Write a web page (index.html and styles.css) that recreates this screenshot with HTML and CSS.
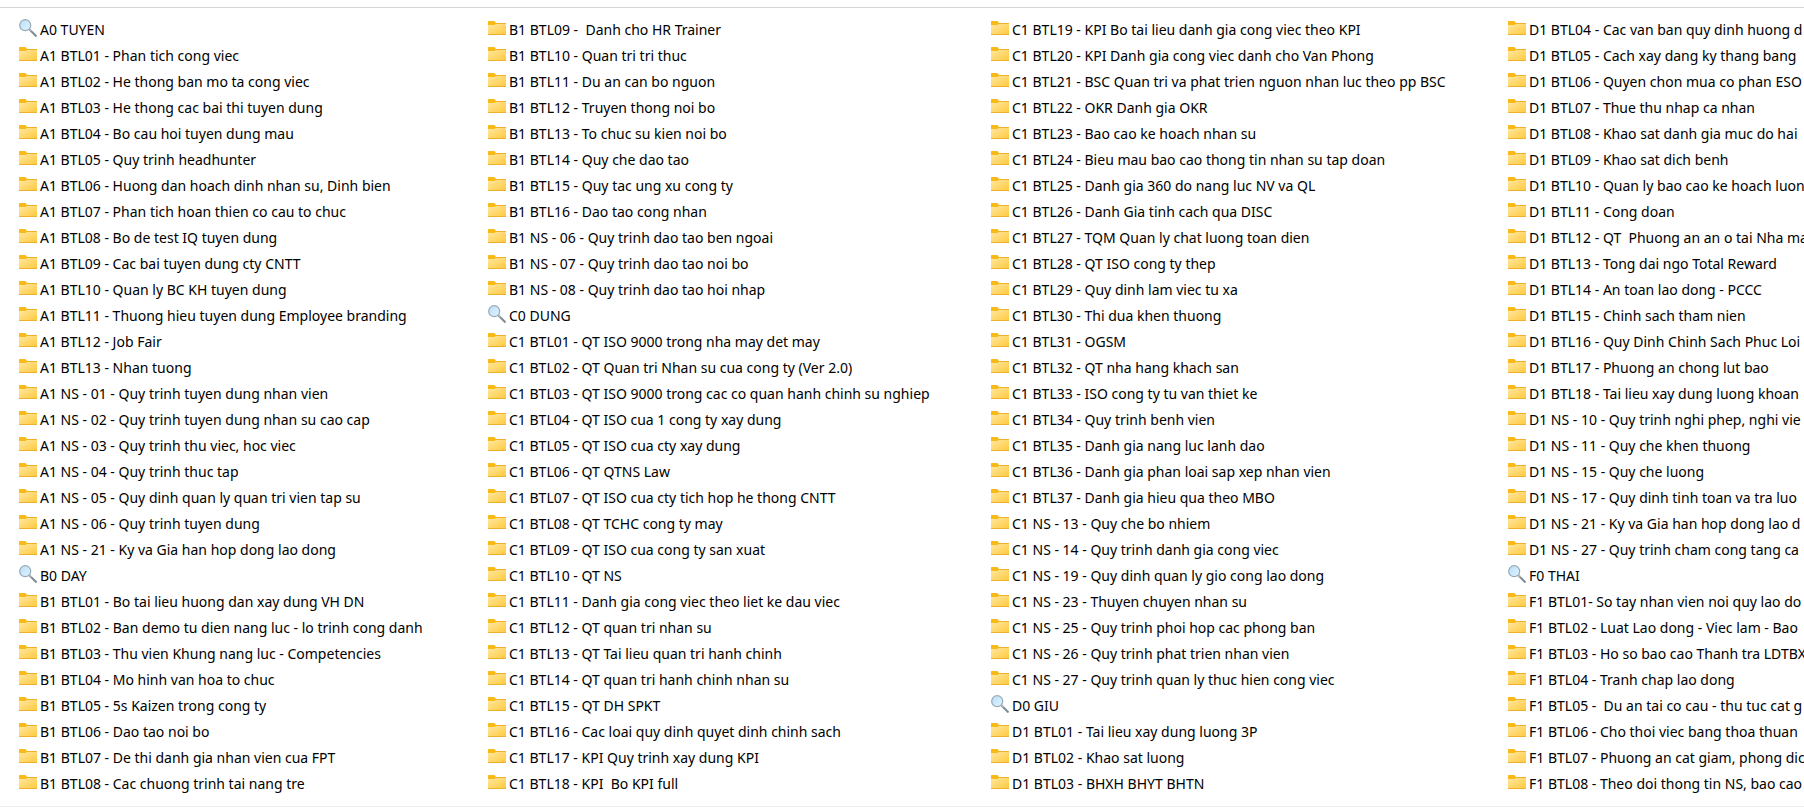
FILE: index.html
```html
<!DOCTYPE html>
<html lang="vi">
<head>
<meta charset="UTF-8">
<meta name="viewport" content="width=device-width, initial-scale=1.0">
<title>BTL</title>
<link rel="stylesheet" href="styles.css">
</head>
<body>
<svg class="sprite" aria-hidden="true">
    <defs>
        <linearGradient id="folder-face" x1="0" y1="0" x2="1" y2="1">
            <stop offset="0" stop-color="#ffe8a3"/>
            <stop offset="1" stop-color="#ffc93d"/>
        </linearGradient>
        <linearGradient id="lens-face" x1="0" y1="0" x2="1" y2="1">
            <stop offset="0" stop-color="#b9defa"/>
            <stop offset="1" stop-color="#e0f4ff"/>
        </linearGradient>
    </defs>
    <symbol id="folder" viewBox="0 0 18 18">
        <path d="M0 2.5Q0 2 .6 2H6Q6.600 2 7 2.500L8 4H18V8H0Z" fill="#f9b917"/>
        <path d="M0 6H6.500L8 4.700H18V15.500H0Z" fill="url(#folder-face)"/>
        <path d="M8 4.500H18" stroke="#f0b02c" stroke-width="1"/>
        <path d="M0 15.500H18" stroke="#eeb030" stroke-width="1"/>
    </symbol>
    <symbol id="search" viewBox="0 0 18 18">
        <path d="M10.500 10.500L17.500 17.500" stroke="#7f8b94" stroke-width="2"/>
        <path d="M10.500 10L12.500 12" stroke="#b5bec5" stroke-width="1.500"/>
        <circle cx="6.200" cy="6.200" r="5.500" fill="url(#lens-face)" stroke="#98a8b5" stroke-width="1.200"/>
    </symbol>
</svg>

<nav class="folders" id="folders"></nav>

<script>
    var columns = [
        [
            "A0 TUYEN",
            "A1 BTL01 - Phan tich cong viec",
            "A1 BTL02 - He thong ban mo ta cong viec",
            "A1 BTL03 - He thong cac bai thi tuyen dung",
            "A1 BTL04 - Bo cau hoi tuyen dung mau",
            "A1 BTL05 - Quy trinh headhunter",
            "A1 BTL06 - Huong dan hoach dinh nhan su, Dinh bien",
            "A1 BTL07 - Phan tich hoan thien co cau to chuc",
            "A1 BTL08 - Bo de test IQ tuyen dung",
            "A1 BTL09 - Cac bai tuyen dung cty CNTT",
            "A1 BTL10 - Quan ly BC KH tuyen dung",
            "A1 BTL11 - Thuong hieu tuyen dung Employee branding",
            "A1 BTL12 - Job Fair",
            "A1 BTL13 - Nhan tuong",
            "A1 NS - 01 - Quy trinh tuyen dung nhan vien",
            "A1 NS - 02 - Quy trinh tuyen dung nhan su cao cap",
            "A1 NS - 03 - Quy trinh thu viec, hoc viec",
            "A1 NS - 04 - Quy trinh thuc tap",
            "A1 NS - 05 - Quy dinh quan ly quan tri vien tap su",
            "A1 NS - 06 - Quy trinh tuyen dung",
            "A1 NS - 21 - Ky va Gia han hop dong lao dong",
            "B0 DAY",
            "B1 BTL01 - Bo tai lieu huong dan xay dung VH DN",
            "B1 BTL02 - Ban demo tu dien nang luc - lo trinh cong danh",
            "B1 BTL03 - Thu vien Khung nang luc - Competencies",
            "B1 BTL04 - Mo hinh van hoa to chuc",
            "B1 BTL05 - 5s Kaizen trong cong ty",
            "B1 BTL06 - Dao tao noi bo",
            "B1 BTL07 - De thi danh gia nhan vien cua FPT",
            "B1 BTL08 - Cac chuong trinh tai nang tre"
        ],
        [
            "B1 BTL09 -  Danh cho HR Trainer",
            "B1 BTL10 - Quan tri tri thuc",
            "B1 BTL11 - Du an can bo nguon",
            "B1 BTL12 - Truyen thong noi bo",
            "B1 BTL13 - To chuc su kien noi bo",
            "B1 BTL14 - Quy che dao tao",
            "B1 BTL15 - Quy tac ung xu cong ty",
            "B1 BTL16 - Dao tao cong nhan",
            "B1 NS - 06 - Quy trinh dao tao ben ngoai",
            "B1 NS - 07 - Quy trinh dao tao noi bo",
            "B1 NS - 08 - Quy trinh dao tao hoi nhap",
            "C0 DUNG",
            "C1 BTL01 - QT ISO 9000 trong nha may det may",
            "C1 BTL02 - QT Quan tri Nhan su cua cong ty (Ver 2.0)",
            "C1 BTL03 - QT ISO 9000 trong cac co quan hanh chinh su nghiep",
            "C1 BTL04 - QT ISO cua 1 cong ty xay dung",
            "C1 BTL05 - QT ISO cua cty xay dung",
            "C1 BTL06 - QT QTNS Law",
            "C1 BTL07 - QT ISO cua cty tich hop he thong CNTT",
            "C1 BTL08 - QT TCHC cong ty may",
            "C1 BTL09 - QT ISO cua cong ty san xuat",
            "C1 BTL10 - QT NS",
            "C1 BTL11 - Danh gia cong viec theo liet ke dau viec",
            "C1 BTL12 - QT quan tri nhan su",
            "C1 BTL13 - QT Tai lieu quan tri hanh chinh",
            "C1 BTL14 - QT quan tri hanh chinh nhan su",
            "C1 BTL15 - QT DH SPKT",
            "C1 BTL16 - Cac loai quy dinh quyet dinh chinh sach",
            "C1 BTL17 - KPI Quy trinh xay dung KPI",
            "C1 BTL18 - KPI  Bo KPI full"
        ],
        [
            "C1 BTL19 - KPI Bo tai lieu danh gia cong viec theo KPI",
            "C1 BTL20 - KPI Danh gia cong viec danh cho Van Phong",
            "C1 BTL21 - BSC Quan tri va phat trien nguon nhan luc theo pp BSC",
            "C1 BTL22 - OKR Danh gia OKR",
            "C1 BTL23 - Bao cao ke hoach nhan su",
            "C1 BTL24 - Bieu mau bao cao thong tin nhan su tap doan",
            "C1 BTL25 - Danh gia 360 do nang luc NV va QL",
            "C1 BTL26 - Danh Gia tinh cach qua DISC",
            "C1 BTL27 - TQM Quan ly chat luong toan dien",
            "C1 BTL28 - QT ISO cong ty thep",
            "C1 BTL29 - Quy dinh lam viec tu xa",
            "C1 BTL30 - Thi dua khen thuong",
            "C1 BTL31 - OGSM",
            "C1 BTL32 - QT nha hang khach san",
            "C1 BTL33 - ISO cong ty tu van thiet ke",
            "C1 BTL34 - Quy trinh benh vien",
            "C1 BTL35 - Danh gia nang luc lanh dao",
            "C1 BTL36 - Danh gia phan loai sap xep nhan vien",
            "C1 BTL37 - Danh gia hieu qua theo MBO",
            "C1 NS - 13 - Quy che bo nhiem",
            "C1 NS - 14 - Quy trinh danh gia cong viec",
            "C1 NS - 19 - Quy dinh quan ly gio cong lao dong",
            "C1 NS - 23 - Thuyen chuyen nhan su",
            "C1 NS - 25 - Quy trinh phoi hop cac phong ban",
            "C1 NS - 26 - Quy trinh phat trien nhan vien",
            "C1 NS - 27 - Quy trinh quan ly thuc hien cong viec",
            "D0 GIU",
            "D1 BTL01 - Tai lieu xay dung luong 3P",
            "D1 BTL02 - Khao sat luong",
            "D1 BTL03 - BHXH BHYT BHTN"
        ],
        [
            "D1 BTL04 - Cac van ban quy dinh huong d",
            "D1 BTL05 - Cach xay dang ky thang bang",
            "D1 BTL06 - Quyen chon mua co phan ESO",
            "D1 BTL07 - Thue thu nhap ca nhan",
            "D1 BTL08 - Khao sat danh gia muc do hai",
            "D1 BTL09 - Khao sat dich benh",
            "D1 BTL10 - Quan ly bao cao ke hoach luon",
            "D1 BTL11 - Cong doan",
            "D1 BTL12 - QT  Phuong an an o tai Nha ma",
            "D1 BTL13 - Tong dai ngo Total Reward",
            "D1 BTL14 - An toan lao dong - PCCC",
            "D1 BTL15 - Chinh sach tham nien",
            "D1 BTL16 - Quy Dinh Chinh Sach Phuc Loi",
            "D1 BTL17 - Phuong an chong lut bao",
            "D1 BTL18 - Tai lieu xay dung luong khoan",
            "D1 NS - 10 - Quy trinh nghi phep, nghi vie",
            "D1 NS - 11 - Quy che khen thuong",
            "D1 NS - 15 - Quy che luong",
            "D1 NS - 17 - Quy dinh tinh toan va tra luo",
            "D1 NS - 21 - Ky va Gia han hop dong lao d",
            "D1 NS - 27 - Quy trinh cham cong tang ca",
            "F0 THAI",
            "F1 BTL01- So tay nhan vien noi quy lao do",
            "F1 BTL02 - Luat Lao dong - Viec lam - Bao",
            "F1 BTL03 - Ho so bao cao Thanh tra LDTBX",
            "F1 BTL04 - Tranh chap lao dong",
            "F1 BTL05 -  Du an tai co cau - thu tuc cat g",
            "F1 BTL06 - Cho thoi viec bang thoa thuan",
            "F1 BTL07 - Phuong an cat giam, phong dic",
            "F1 BTL08 - Theo doi thong tin NS, bao cao"
        ]
    ];

    var html = "";
    columns.forEach(function (names) {
        html += '<ul class="column">';
        names.forEach(function (name) {
            // group rows are A0, B0, C0...
            var icon = name.charAt(1) === "0" ? "search" : "folder";
            html += '<li><a class="item" href="#"><svg class="icon" aria-hidden="true"><use href="#' + icon + '"/></svg>' +
                '<span class="name">' + name + '</span></a></li>';
        });
        html += '</ul>';
    });
    document.getElementById("folders").innerHTML = html;
</script>
</body>
</html>
```
FILE: styles.css
```css
body {
    font-family: "Segoe UI", "Noto Sans", "Open Sans", sans-serif;
    font-size: 14px;
    margin: 0;
    padding-top: 7px;
    background-color: #fff;
    color: #000;
    overflow-x: hidden;
}

.sprite {
    position: absolute;
    width: 0;
    height: 0;
}

.folders {
    display: grid;
    grid-template-columns: minmax(0, 469fr) minmax(0, 503fr) minmax(0, 517fr) minmax(0, 296fr);
    padding: 7px 0 11px 19px;
    border-top: 1px solid #d5d5d5;
    border-bottom: 1px solid #eee;
    overflow: hidden;
}

.column {
    list-style: none;
    margin: 0;
    padding: 0;
}

.item {
    display: flex;
    align-items: center;
    gap: 3px;
    height: 26px;
    color: inherit;
    text-decoration: none;
    white-space: pre;
}

.icon {
    flex: none;
    width: 18px;
    height: 18px;
}

.name {
    padding-top: 2px;
}
```
